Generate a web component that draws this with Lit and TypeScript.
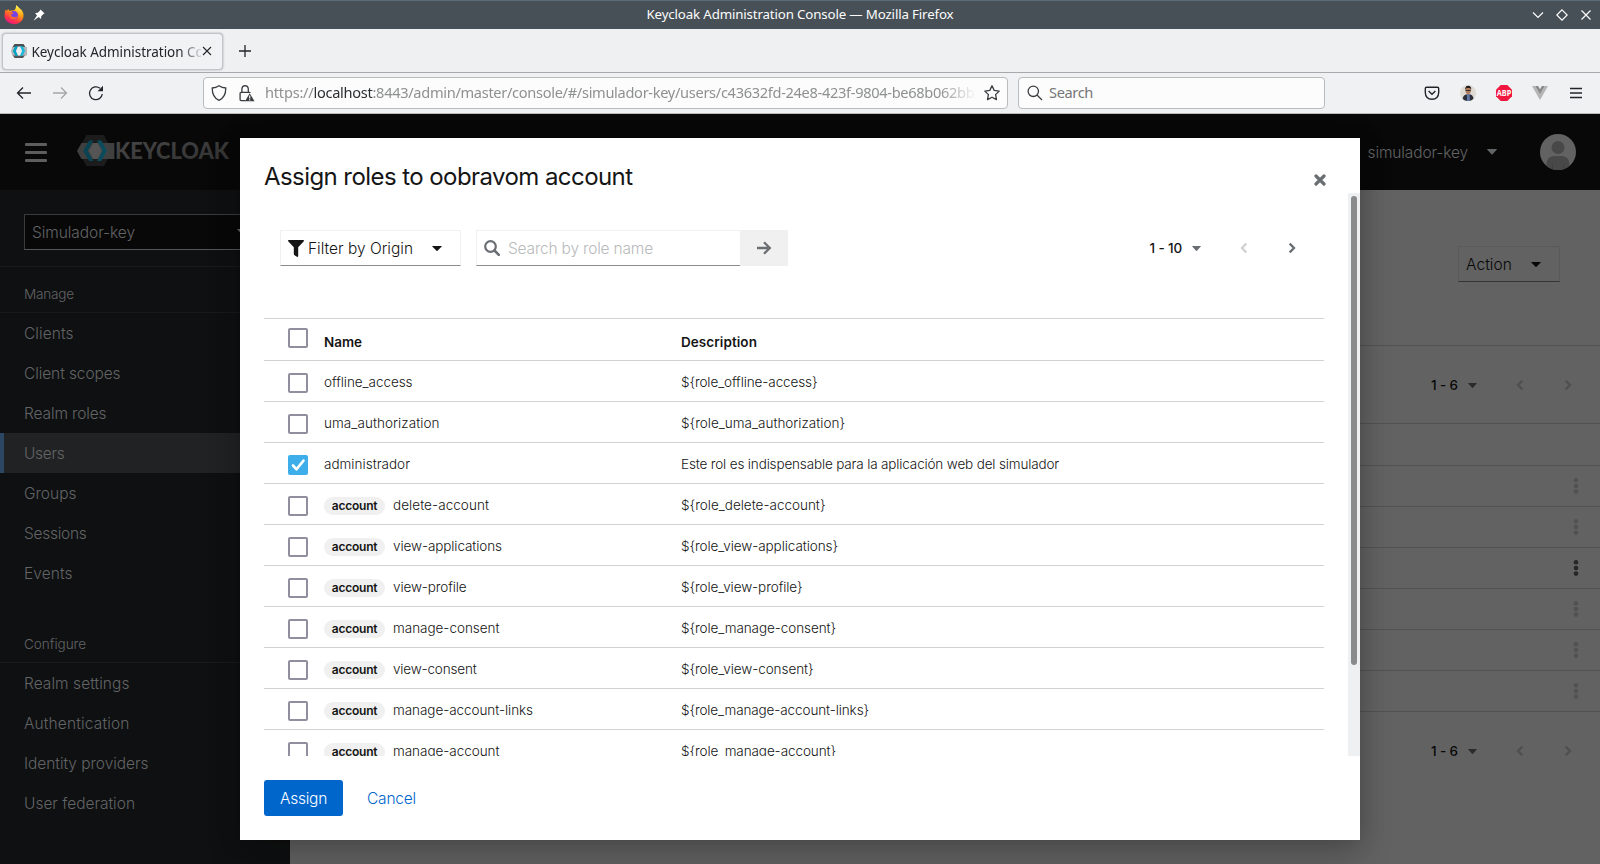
import { LitElement, html, css } from "lit";
import { customElement, property } from "lit/decorators.js";

/** Inline label whose tracking is adjusted so that it fills a given advance width. */
@customElement("fit-text")
class FitText extends LitElement {
  @property({ type: Number }) w = 0;
  @property() text = "";
  static styles = css`
    :host { display: inline-block; white-space: pre; }
  `;
  render() {
    return html`<span class="t">${this.text}</span>`;
  }
  updated() {
    const el = this.renderRoot.querySelector(".t") as HTMLElement;
    el.style.letterSpacing = "0px";
    const natural = el.getBoundingClientRect().width;
    el.style.letterSpacing = `${(this.w - natural) / this.text.length}px`;
  }
}

const fit = (text: string, w: number) => html`<fit-text .text=${text} .w=${w}></fit-text>`;

const angle = (dir: "left" | "right") => html`
  <svg class="angle" viewBox="0 0 8 12" width="8" height="12">
    <path d=${dir === "left" ? "M6.3 1.6 2 6l4.3 4.4" : "M1.7 1.6 6 6l-4.3 4.4"} fill="none" stroke="currentColor" stroke-width="2.3"/>
  </svg>`;

const caret = (w: number, h: number) => html`
  <svg class="caret" viewBox="0 0 10 5" width=${w} height=${h} preserveAspectRatio="none">
    <path d="M.6 0h8.8q.8 0 .3.6L5.5 4.7q-.5.5-1 0L.3.6Q-.2 0 .6 0z" fill="currentColor"/>
  </svg>`;

const kebab = html`<svg viewBox="0 0 6 18" width="6" height="18"><g fill="currentColor"><circle cx="3" cy="3.3" r="2.3"/><circle cx="3" cy="9" r="2.3"/><circle cx="3" cy="14.6" r="2.3"/></g></svg>`;

const firefox = html`
  <svg viewBox="0 0 20 20" width="20" height="20">
    <defs>
      <linearGradient id="ff" x1=".8" y1="0" x2=".3" y2="1"><stop offset="0" stop-color="#fff44f"/><stop offset=".4" stop-color="#ff980e"/><stop offset=".75" stop-color="#ff3647"/><stop offset="1" stop-color="#e31587"/></linearGradient>
      <linearGradient id="fy" x1=".6" y1="0" x2=".6" y2="1"><stop offset="0" stop-color="#fff44f"/><stop offset="1" stop-color="#ff980e" stop-opacity="0"/></linearGradient>
    </defs>
    <path d="M1.6 4.6 2.9 6 4 4.1l1.6 1.6 4.4-.5 1.9-1.6L12.400 .3l3.2 3.300 2.100 1.500L19.400 8.600v3.300a9.500 8.500 0 0 1-18.900-.6Q.4 7 1.600 4.600z" fill="url(#ff)"/>
    <circle cx="9.800" cy="10.200" r="4.200" fill="#7542e5"/>
    <path d="M5 8.200Q7 6.500 9.600 7.800 8.700 9.300 7 9.500 7.200 12 9.900 12.300 12.500 12.300 13.300 10.400 12.500 14.800 8.500 14.300 5 13.400 5 8.200z" fill="#ff6a2b"/>
    <path d="M12.400 .3 15.600 3.600 18 7v4.500q-1.500 3.500-5 4.300 2.700-4 1.100-7.400-1.700-2.300-2.700-4.300z" fill="url(#fy)"/>
  </svg>`;

const pin = html`<svg class="pin" viewBox="0 0 12 12" width="12" height="12"><path d="M7.500.4 11.600 4.400 10.400 5 8.300 7.200 8 9.900 5.700 8 .5 11.700 4 6.400 2.100 4l2.700-.3L7 1.500z" fill="#fff"/></svg>`;

const favicon = html`
  <svg viewBox="0 0 16 16" width="16" height="16">
    <path d="M3.500 1h9l2.500 4H1z" fill="#4d4d4d"/><path d="M1 11h14l-3 4H3.500z" fill="#555"/>
    <path d="M0 8l1.500-4H16v8.500H1.500z" fill="#b3b5b7"/>
    <path d="M4.300 3.200h3L5 8l2.400 4.800h-3L1.900 8z" fill="#00a3c4"/><path d="M8.700 3.200h3L14 8l-2.400 4.800h-3L11 8z" fill="#19b9dc"/>
    <path d="M7 3.500h2L11 8l-2 4.500H7L5 8z" fill="#eee"/>
  </svg>`;

const logo = html`
  <svg viewBox="0 0 38 32" width="38" height="32">
    <path d="M9.300 0h17.500l8.500 15.500L27 31H9.300L1.500 15.500z" fill="#1c1c1c"/>
    <path d="M4.500 8H37.400v16H4.500L0 16z" fill="#404040"/>
    <path d="M13 8h13.500l5 8-5 8H13l-4.500-8z" fill="#454545"/>
    <path d="M16.500 8h4l4.200 7.800L20.500 24h-4l-4.600-8.200z" fill="#555"/>
    <path d="M12 5.500h4.500L10.800 15.800 16.500 26H12L6.200 15.800z" fill="#0a4352"/>
    <path d="M20 5.500h4.300L30.200 15.800 24.300 26H20l5.400-10.200z" fill="#0b4b5c"/>
  </svg>`;

type NavItem = [string, number];
const MANAGE: NavItem[] = [["Clients", 49.5], ["Client scopes", 96.5], ["Realm roles", 82.5], ["Users", 40.5], ["Groups", 52.5], ["Sessions", 62.5], ["Events", 48.5]];
const CONFIGURE: NavItem[] = [["Realm settings", 105.5], ["Authentication", 105.5], ["Identity providers", 124.5], ["User federation", 111]];

interface Role { name: string; nw: number; desc: string; dw: number; account?: boolean; checked?: boolean; }
const ROLES: Role[] = [
  { name: "offline_access", nw: 88.5, desc: "${role_offline-access}", dw: 136.5 },
  { name: "uma_authorization", nw: 115.5, desc: "${role_uma_authorization}", dw: 164 },
  { name: "administrador", nw: 86, desc: "Este rol es indispensable para la aplicación web del simulador", dw: 378, checked: true },
  { name: "delete-account", nw: 96, desc: "${role_delete-account}", dw: 144.5, account: true },
  { name: "view-applications", nw: 109, desc: "${role_view-applications}", dw: 157, account: true },
  { name: "view-profile", nw: 73.5, desc: "${role_view-profile}", dw: 121.5, account: true },
  { name: "manage-consent", nw: 106.5, desc: "${role_manage-consent}", dw: 155, account: true },
  { name: "view-consent", nw: 83.5, desc: "${role_view-consent}", dw: 132.5, account: true },
  { name: "manage-account-links", nw: 140, desc: "${role_manage-account-links}", dw: 188, account: true },
  { name: "manage-account", nw: 106.5, desc: "${role_manage-account}", dw: 155, account: true },
];

@customElement("app-root")
class AppRoot extends LitElement {
  static styles = css`
    :host { display: flex; flex-direction: column; width: 1600px; height: 864px; overflow: hidden; font-family: Inter, "Liberation Sans", sans-serif; font-size: 15.5px; color: #151515; }
    * { box-sizing: border-box; }
    svg { display: block; flex: none; }
    .chrome { font-family: "Noto Sans", sans-serif; }

    .titlebar { height: 29px; flex: none; background: #475057; border-top: 1px solid #5b6c78; display: grid; grid-template-columns: 1fr auto 1fr; align-items: center; color: #fcfcfc; font-size: 13.3px; padding-bottom: 1px; }
    .titlebar fit-text { margin-bottom: 2px; }
    .titlebar .left { display: flex; align-items: center; gap: 8.5px; padding-left: 4px; }
    .titlebar .right { display: flex; justify-content: flex-end; gap: 12px; padding-right: 8px; }

    .tabs { height: 44px; flex: none; background: #eff0f2; border-bottom: 1px solid #a7a9ac; display: flex; align-items: center; padding: 1px 0 0 2px; gap: 15.5px; }
    .tab { width: 221px; height: 37px; border-radius: 4px; background: #f1f2f4; border: 1px solid #c3c5c8; box-shadow: 0 0 2px #9b9da0; display: flex; align-items: center; padding-left: 7.5px; color: #232629; font-size: 13.5px; }
    .tab .label { margin: 2px 0 0 5px; width: 169px; overflow: hidden; -webkit-mask-image: linear-gradient(to right, #000 148px, transparent 172px); mask-image: linear-gradient(to right, #000 148px, transparent 172px); }

    .toolbar { height: 41px; flex: none; background: #f0f1f3; border-bottom: 1px solid #b9bbbd; display: flex; align-items: center; font-size: 14.6px; }
    .nav { width: 203px; display: flex; align-items: center; padding-left: 16px; gap: 20px; color: #232629; }
    .field { height: 32px; background: #fcfcfc; border: 1px solid #b9bbbe; border-radius: 4px; display: flex; align-items: center; }
    .url { width: 805px; padding-left: 7px; color: #8f9091; }
    .url .lock { margin-left: 12px; }
    .url .addr { margin: 0 0 2px 10px; width: 713px; overflow: hidden; white-space: nowrap; -webkit-mask-image: linear-gradient(to right, #000 675px, transparent 712px); mask-image: linear-gradient(to right, #000 675px, transparent 712px); }
    .url .star { margin-left: 5px; }
    .host { color: #2c2f32; }
    .search { width: 307px; margin-left: 10px; padding-left: 8px; gap: 6px; color: #757677; }
    .search fit-text { margin-bottom: 2px; }
    .ext { margin-left: auto; display: flex; align-items: center; justify-content: space-between; width: 160px; margin-right: 16px; }

    .page { flex: 1; position: relative; display: flex; flex-direction: column; background: #626262; overflow: hidden; }
    .masthead { height: 76px; flex: none; background: #080808; display: flex; align-items: center; padding: 0 24px 0 25px; color: #626466; font-weight: 300; }
    .burger { width: 22px; height: 19px; display: flex; flex-direction: column; justify-content: space-between; }
    .burger i { height: 3px; background: #5e5e5e; border-radius: 1px; }
    .brand { display: flex; align-items: center; margin: 0 0 2px 30px; }
    .realm { margin: 1px 0 0 auto; display: flex; align-items: center; }
    .realm .caret { margin-left: 19px; margin-bottom: 1px; }
    .avatar { margin-left: 43px; }
    .columns { flex: 1; display: flex; }
    .sidebar { width: 290px; background: #0f1011; color: #626466; font-weight: 300; }
    .picker { padding: 24px; height: 77px; border-bottom: 1px solid #191a1c; }
    .picker .box { height: 36px; border: 1px solid #3a3b3c; border-bottom-color: #555; background: #080808; padding: 0 18px 0 7px; display: flex; align-items: center; justify-content: space-between; }
    .picker .caret { margin-bottom: 2px; }
    .group { height: 46px; padding-left: 24px; border-bottom: 1px solid #191a1c; font-size: 13.6px; line-height: 55px; }
    .group.second { height: 70px; line-height: 103px; }
    .item { height: 40px; padding-left: 24px; line-height: 42px; }
    .item.active { background: #212224; border-left: 4px solid #2b4764; padding-left: 20px; }

    .main { flex: 1; display: flex; flex-direction: column; align-items: stretch; color: #080808; }
    .actions { height: 156px; border-bottom: 1px solid #525252; padding: 56px 40px 0; display: flex; justify-content: flex-end; }
    .action { width: 102px; height: 36px; border: 1px solid #5a5a5a; border-bottom-color: #353535; padding: 0 18px 0 7px; display: flex; align-items: center; justify-content: space-between; font-weight: 350; }
    .pager { display: flex; align-items: center; font-weight: 500; font-size: 13.5px; }
    .pager .caret { margin-left: 10px; color: #2a2b2e; }
    .pager .angle { color: #4f5051; }
    .main .pager { justify-content: flex-end; padding-right: 28px; height: 77px; padding-top: 1px; }
    .gap-a { margin-left: 39px; }
    .gap-b { margin-left: 40px; }
    .krow { height: 41px; border-bottom: 1px solid #525252; display: flex; justify-content: flex-end; align-items: center; padding-right: 21px; color: #515253; }
    .krow.first { height: 43px; border-top: 1px solid #525252; }
    .krow.on { color: #252628; }

    .modal { position: absolute; left: 240px; top: 24px; width: 1120px; height: 702px; background: #fff; box-shadow: 0 16px 32px rgba(3,3,3,.18), 0 0 24px rgba(3,3,3,.16); display: flex; flex-direction: column; }
    .mhead { height: 55px; flex: none; padding: 0 34px 0 24px; display: flex; justify-content: space-between; align-items: flex-start; }
    .mhead h1 { margin: 22px 0 0; font-size: 24px; font-weight: 400; line-height: 34px; }
    .mhead .close { margin-top: 36px; }
    .mbody { height: 563px; flex: none; display: flex; overflow: hidden; }
    .content { width: 1108px; padding: 37px 24px 0; }
    .track { width: 12px; background: #eff0f1; padding: 3px 3px; }
    .thumb { width: 6px; height: 469px; border-radius: 3px; background: #898b8d; }
    .tools { height: 36px; display: flex; align-items: center; padding: 0 28px 0 16px; margin-bottom: 52px; font-weight: 350; }
    .filter { width: 181px; height: 36px; border: 1px solid #f0f0f0; border-bottom-color: #8a8d90; display: flex; align-items: center; padding-left: 7px; }
    .filter .caret { margin-left: 19px; }
    .filter svg:first-child { margin-right: 4px; }
    .query { margin-left: 15px; width: 264px; height: 36px; border: 1px solid #f0f0f0; border-bottom-color: #8a8d90; border-right: 0; display: flex; align-items: center; padding-left: 7px; gap: 8px; color: #b8babc; }
    .go { width: 48px; height: 36px; background: #f0f0f0; display: flex; align-items: center; justify-content: center; }
    .tools .pager { margin-left: auto; }
    .tools .pager .caret { color: #6a6e73; }
    .tools .pager .gap-a .angle { color: #d2d2d2; }
    .tools .pager .gap-b .angle { color: #6a6e73; }
    .row { height: 41px; border-bottom: 1px solid #d2d2d2; display: grid; grid-template-columns: 36px 357px 1fr; padding-left: 24px; font-size: 13.5px; line-height: 18px; font-weight: 350; }
    .row.header { height: 43px; border-top: 1px solid #d2d2d2; font-weight: 600; }
    .row > div { padding-top: 12px; }
    .row.header > div { padding-top: 14px; }
    .row.header > .c { padding-top: 9px; }
    .box20 { width: 20px; height: 20px; border: 2px solid #918e9f; border-radius: 2px; }
    .n { display: flex; }
    .badge { width: 61px; height: 18px; border-radius: 9px; background: #f0f0f0; font-size: 12px; font-weight: 600; text-align: center; line-height: 18px; margin: 1px 8px 0 0; }
    .mfoot { display: flex; align-items: center; padding: 0 24px; flex: 1; font-weight: 350; }
    .assign { width: 79px; height: 36px; border-radius: 3px; background: #06c; color: #fff; display: flex; align-items: center; justify-content: center; }
    .cancel { color: #06c; margin-left: 24px; }
  `;

  private pager(label: string, w: number) {
    return html`<div class="pager">${fit(label, w)}${caret(9, 5)}<span class="gap-a">${angle("left")}</span><span class="gap-b">${angle("right")}</span></div>`;
  }

  private items(list: NavItem[]) {
    return list.map(([t, w]) => html`<div class="item ${t === "Users" ? "active" : ""}">${fit(t, w)}</div>`);
  }

  render() {
    return html`
      <div class="titlebar chrome">
        <div class="left">${firefox}${pin}</div>
        ${fit("Keycloak Administration Console — Mozilla Firefox", 307)}
        <div class="right">
          <svg viewBox="0 0 12 12" width="12" height="12"><path d="M1 3.500l5 5 5-5" fill="none" stroke="#fcfcfc" stroke-width="1.200"/></svg>
          <svg viewBox="0 0 12 12" width="12" height="12"><path d="M6 .8 11.200 6 6 11.200.8 6z" fill="none" stroke="#fcfcfc" stroke-width="1.200"/></svg>
          <svg viewBox="0 0 12 12" width="12" height="12"><path d="M1.500 1.500l9 9m0-9l-9 9" fill="none" stroke="#fcfcfc" stroke-width="1.200"/></svg>
        </div>
      </div>
      <div class="tabs chrome">
        <div class="tab">${favicon}<div class="label">${fit("Keycloak Administration Console", 206)}</div>
          <svg viewBox="0 0 12 12" width="12" height="12"><path d="M2 2l8 8m0-8l-8 8" stroke="#232629" stroke-width="1.100"/></svg>
        </div>
        <svg viewBox="0 0 12 12" width="12" height="12"><path d="M6 0v12M0 6h12" stroke="#232629" stroke-width="1.300"/></svg>
      </div>
      <div class="toolbar chrome">
        <div class="nav">
          <svg viewBox="0 0 16 16" width="16" height="16"><path d="M15 8H1.500M7 2.500 1.500 8 7 13.500" fill="none" stroke="currentColor" stroke-width="1.300"/></svg>
          <svg viewBox="0 0 16 16" width="16" height="16"><path d="M1 8h13.500M9 2.500 14.500 8 9 13.500" fill="none" stroke="#a5a7a9" stroke-width="1.300"/></svg>
          <svg viewBox="0 0 16 16" width="16" height="16"><path d="M14.300 9A6.400 6.400 0 1 1 12 3.300" fill="none" stroke="currentColor" stroke-width="1.300"/><path d="M15 .8V6.200H9.600z" fill="currentColor"/></svg>
        </div>
        <div class="field url">
          <svg viewBox="0 0 16 16" width="16" height="16"><path d="M8 .8Q11 2.800 14.800 3 14.800 12.500 8 15.300 1.200 12.500 1.200 3 5 2.800 8 .8z" fill="none" stroke="#3a3d40" stroke-width="1.300"/></svg>
          <svg class="lock" viewBox="0 0 16 17" width="16" height="17"><path d="M7 15.600H2.700q-1 0-1-1V8.300q0-1 1-1h8q1 0 1 .8M3.500 7V3.800q.2-2.900 3.200-3.100 3 .2 3.200 3.100V7" transform="translate(-.6 0)" fill="none" stroke="#3a3d40" stroke-width="1.300"/><path d="M10.700 8.200 15.500 16.300H6z" fill="#3a3d40"/><path d="M10.700 10.600v2.800m0 .9v1.100" stroke="#fcfcfc" stroke-width="1.200"/></svg>
          <div class="addr">${fit("https://", 48.5)}<span class="host">${fit("localhost", 59)}</span>${fit(":8443/admin/master/console/#/simulador-key/users/c43632fd-24e8-423f-9804-be68b062bb2", 610)}</div>
          <svg class="star" viewBox="0 0 18 18" width="18" height="18"><path d="M9 1.800 11.200 6.400 16.200 7.100 12.600 10.600 13.500 15.600 9 13.200 4.500 15.600 5.400 10.600 1.800 7.100 6.800 6.400z" fill="none" stroke="#3a3d40" stroke-width="1.300" stroke-linejoin="round"/></svg>
        </div>
        <div class="field search">
          <svg viewBox="0 0 16 16" width="16" height="16"><circle cx="6.300" cy="6.300" r="5.200" fill="none" stroke="#3a3d40" stroke-width="1.300"/><path d="M10 10l5 5" stroke="#3a3d40" stroke-width="1.300"/></svg>
          ${fit("Search", 44)}
        </div>
        <div class="ext">
          <svg viewBox="0 0 16 16" width="16" height="16"><path d="M2.500 2.200h11q1.200 0 1.200 1.200V7.500Q14.500 14 8 14.300 1.500 14 1.300 7.500V3.400Q1.300 2.200 2.500 2.200z" fill="none" stroke="#232629" stroke-width="1.400"/><path d="M4.600 6 8 9.300 11.400 6" fill="none" stroke="#232629" stroke-width="1.400"/></svg>
          <svg viewBox="0 0 16 16" width="16" height="16"><defs><clipPath id="av"><circle cx="8" cy="8" r="8"/></clipPath></defs><g clip-path="url(#av)"><path d="M0 0h16v16H0z" fill="#dedad4"/><path d="M2.500 16Q2.300 10.500 6 9.500h4.500Q14 10.500 13.500 16z" fill="#2c2f3a"/><path d="M7 9h2.500l.5 7H7z" fill="#6377a8"/><ellipse cx="8.200" cy="5.500" rx="2.600" ry="3.800" fill="#b07c5c"/><path d="M5.300 5Q4.800 1 8.200.8 11.800 1 11.100 5L10 3H6.500z" fill="#221c1b"/><path d="M5.600 5h5.200v1H5.600z" fill="#3b2b27"/></g></svg>
          <svg viewBox="0 0 16 16" width="16" height="16"><path d="M4.700 0h6.600L16 4.700v6.600L11.300 16H4.700L0 11.300V4.700z" fill="#f0183e"/><text x="8" y="11.200" text-anchor="middle" font-size="9" font-weight="700" textLength="14.500" lengthAdjust="spacingAndGlyphs" fill="#fff">ABP</text></svg>
          <svg viewBox="0 0 16 16" width="16" height="16"><path d="M0 1h3.200L8 9.300 12.800 1H16L8 15z" fill="#b5b5b5"/><path d="M3.200 1h3L8 4.200 9.800 1h3L8 9.300z" fill="#8a8a8a"/></svg>
          <svg viewBox="0 0 16 16" width="16" height="16"><path d="M2 3.500h12M2 8h12M2 12.500h12" stroke="#232629" stroke-width="1.300"/></svg>
        </div>
      </div>
      <div class="page">
        <div class="masthead">
          <div class="burger"><i></i><i></i><i></i></div>
          <div class="brand">${logo}<svg width="118" height="32" viewBox="0 0 118 32"><defs><linearGradient id="kw" x1="0" y1="0" x2="1" y2="1"><stop offset="0" stop-color="#484848"/><stop offset="1" stop-color="#303030"/></linearGradient></defs><text x="0" y="24" font-family="Lato, sans-serif" font-weight="900" font-size="22.500" textLength="114" lengthAdjust="spacingAndGlyphs" fill="url(#kw)">KEYCLOAK</text></svg></div>
          <div class="realm">${fit("simulador-key", 100.5)}${caret(10, 5.5)}</div>
          <svg class="avatar" viewBox="0 0 36 36" width="36" height="36"><defs><clipPath id="u"><circle cx="18" cy="18" r="18"/></clipPath></defs><g clip-path="url(#u)"><path d="M0 0h36v36H0z" fill="#626262"/><circle cx="18" cy="13.500" r="6.500" fill="#484848"/><path d="M6.500 36V30Q7 22.500 14 22h8q7 .5 7.500 8v6z" fill="#484848"/><path d="M12.500 30v6M23.500 30v6" stroke="#3f3f3f"/></g></svg>
        </div>
        <div class="columns">
          <div class="sidebar">
            <div class="picker"><div class="box">${fit("Simulador-key", 103)}${caret(10, 5)}</div></div>
            <div class="group">${fit("Manage", 50)}</div>
            ${this.items(MANAGE)}
            <div class="group second">${fit("Configure", 62)}</div>
            ${this.items(CONFIGURE)}
          </div>
          <div class="main">
            <div class="actions"><div class="action">${fit("Action", 46)}${caret(10, 5)}</div></div>
            ${this.pager("1 - 6", 27)}
            <div class="krow first"></div>
            ${[0, 0, 1, 0, 0, 0].map((on) => html`<div class="krow ${on ? "on" : ""}">${kebab}</div>`)}
            ${this.pager("1 - 6", 27)}
          </div>
        </div>
        <div class="modal">
          <div class="mhead">
            <h1>${fit("Assign roles to oobravom account", 368.5)}</h1>
            <svg class="close" viewBox="0 0 12 12" width="12" height="12"><path d="M2 2l8 8m0-8l-8 8" stroke="#6a6e73" stroke-width="3.200" stroke-linecap="round"/></svg>
          </div>
          <div class="mbody">
            <div class="content">
              <div class="tools">
                <div class="filter">
                  <svg viewBox="0 0 16 16" width="16" height="17" preserveAspectRatio="none"><path d="M.7 0h14.600q1 .2.500 1.200L10.200 6.800V15q-.3 1.200-1.300.8L6.200 14Q5.800 13.700 5.800 13V6.800L.2 1.200Q-.3.200.7 0z" fill="#151515"/></svg>
                  ${fit("Filter by Origin", 105)}${caret(10, 5)}
                </div>
                <div class="query">
                  <svg viewBox="0 0 16 16" width="16" height="16"><circle cx="6.500" cy="6.500" r="5.300" fill="none" stroke="#6a6e73" stroke-width="2.200"/><path d="M10.500 10.500l4.300 4.300" stroke="#6a6e73" stroke-width="2.600" stroke-linecap="round"/></svg>
                  ${fit("Search by role name", 145)}
                </div>
                <div class="go"><svg viewBox="0 0 16 16" width="16" height="16"><path d="M1 8h12.500M8 2.200 13.800 8 8 13.800" fill="none" stroke="#6a6e73" stroke-width="2.300"/></svg></div>
                ${this.pager("1 - 10", 32.5)}
              </div>
              <div class="row header"><div class="c"><div class="box20"></div></div><div>${fit("Name", 38)}</div><div>${fit("Description", 76)}</div></div>
              ${ROLES.map((r) => html`
                <div class="row">
                  <div class="c">${r.checked
                    ? html`<svg viewBox="0 0 20 20" width="20" height="20"><rect width="20" height="20" rx="2" fill="#3daee9"/><path d="M5 10.500 8.500 14.300 15.500 5.600" fill="none" stroke="#fff" stroke-width="2.600" stroke-linecap="round" stroke-linejoin="round"/></svg>`
                    : html`<div class="box20"></div>`}</div>
                  <div class="n">${r.account ? html`<span class="badge">${fit("account", 45.5)}</span>` : ""}${fit(r.name, r.nw)}</div>
                  <div>${fit(r.desc, r.dw)}</div>
                </div>`)}
            </div>
            <div class="track"><div class="thumb"></div></div>
          </div>
          <div class="mfoot"><div class="assign">${fit("Assign", 47)}</div><div class="cancel">${fit("Cancel", 49)}</div></div>
        </div>
      </div>`;
  }
}
